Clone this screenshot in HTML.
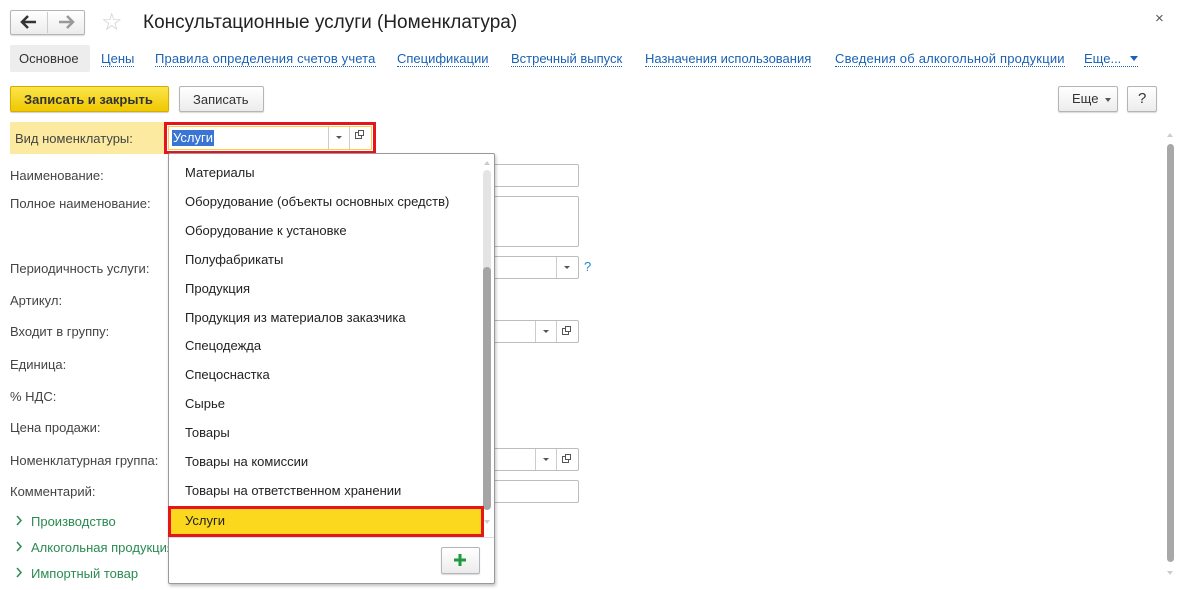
<!DOCTYPE html>
<html><head><meta charset="utf-8"><style>
*{box-sizing:border-box;margin:0;padding:0}
body{width:1177px;height:590px;overflow:hidden;background:#fff;font-family:"Liberation Sans",Arial,sans-serif;font-size:13px;color:#333;position:relative}
.a{position:absolute;white-space:nowrap}
.lnk{color:#1a62b4;border-bottom:1px dotted #1a62b4;line-height:15px}
.btn{position:absolute;border:1px solid #b5b5b5;border-radius:2px;background:linear-gradient(#fff,#ececec);box-shadow:0 1px 1px rgba(0,0,0,.15)}
.inp{position:absolute;border:1px solid #bdbdbd;border-radius:2px;background:#fff}
.lbl{position:absolute;color:#444}
.it{position:absolute;left:185px;color:#222}
.grn{color:#2a8a52}
</style></head><body>
<!-- nav -->
<div class="btn" style="left:10px;top:10px;width:75px;height:25px"></div>
<div class="a" style="left:47px;top:12px;width:1px;height:21px;background:#ccc"></div>
<svg class="a" style="left:20px;top:15px" width="18" height="14"><path d="M2 7H16M8 1L2 7L8 13" stroke="#333" stroke-width="2.5" fill="none"/></svg>
<svg class="a" style="left:57px;top:15px" width="18" height="14"><path d="M2 7H16M10 1L16 7L10 13" stroke="#999" stroke-width="2.5" fill="none"/></svg>
<div class="a" style="left:101px;top:8px;font-size:24px;color:#ccc">☆</div>
<div class="a" style="left:143px;top:12px;font-size:19px;color:#222">Консультационные услуги (Номенклатура)</div>
<div class="a" style="left:1155px;top:10px;font-size:15px;color:#555">×</div>
<!-- tabs -->
<div class="a" style="left:10px;top:45px;width:80px;height:27px;background:#ededed;border-radius:2px"></div>
<div class="a" style="left:19px;top:51px;color:#333">Основное</div>
<div class="a lnk" style="left:101px;top:51px">Цены</div>
<div class="a lnk" style="left:155px;top:51px;letter-spacing:0.15px">Правила определения счетов учета</div>
<div class="a lnk" style="left:397px;top:51px">Спецификации</div>
<div class="a lnk" style="left:511px;top:51px">Встречный выпуск</div>
<div class="a lnk" style="left:645px;top:51px">Назначения использования</div>
<div class="a lnk" style="left:835px;top:51px;letter-spacing:0.2px">Сведения об алкогольной продукции</div>
<div class="a lnk" style="left:1084px;top:51px;width:54px">Еще...</div>
<div class="a" style="left:1130px;top:56px;border:4px solid transparent;border-top:5px solid #1a62b4"></div>
<!-- toolbar -->
<div class="a" style="left:10px;top:86px;width:159px;height:26px;background:linear-gradient(#fbe54a,#f0c800);border:1px solid #d4ad00;border-radius:2px;box-shadow:0 1px 1px rgba(0,0,0,.2)"></div>
<div class="a" style="left:24px;top:92px;color:#333;font-weight:bold;font-size:13px">Записать и закрыть</div>
<div class="btn" style="left:179px;top:86px;width:85px;height:26px"></div>
<div class="a" style="left:193px;top:92px">Записать</div>
<div class="btn" style="left:1058px;top:86px;width:60px;height:26px"></div>
<div class="a" style="left:1072px;top:91px">Еще</div>
<div class="a" style="left:1105px;top:98px;border:3px solid transparent;border-top:4px solid #555"></div>
<div class="btn" style="left:1127px;top:86px;width:30px;height:26px"></div>
<div class="a" style="left:1138px;top:90px;font-size:15px">?</div>
<!-- field row -->
<div class="a" style="left:10px;top:122px;width:154px;height:32px;background:#fbeaa0"></div>
<div class="lbl" style="left:15px;top:131px">Вид номенклатуры:</div>
<div class="a" style="left:164px;top:122px;width:212px;height:32px;border:3px solid #e8141c;background:#fff"></div>
<div class="a" style="left:168px;top:126px;width:204px;height:24px;border:1px solid #f0d050"></div>
<div class="a" style="left:172px;top:130px;background:#3a75d4;color:#fff;padding:0 1px;line-height:16px">Услуги</div>
<div class="a" style="left:328px;top:127px;width:1px;height:22px;background:#ccc"></div>
<div class="a" style="left:349px;top:127px;width:1px;height:22px;background:#ccc"></div>
<div class="a" style="left:336px;top:136px;border:3px solid transparent;border-top:3px solid #555"></div>
<div class="a" style="left:355px;top:132px;width:7px;height:7px;border:1px solid #555"></div>
<div class="a" style="left:358px;top:130px;width:6px;height:6px;border:1px solid #555;background:#fff"></div>
<!-- labels -->
<div class="lbl" style="left:10px;top:168px">Наименование:</div>
<div class="lbl" style="left:10px;top:196px">Полное наименование:</div>
<div class="lbl" style="left:10px;top:261px">Периодичность услуги:</div>
<div class="lbl" style="left:10px;top:293px">Артикул:</div>
<div class="lbl" style="left:10px;top:324px">Входит в группу:</div>
<div class="lbl" style="left:10px;top:357px">Единица:</div>
<div class="lbl" style="left:10px;top:389px">% НДС:</div>
<div class="lbl" style="left:10px;top:420px">Цена продажи:</div>
<div class="lbl" style="left:10px;top:453px">Номенклатурная группа:</div>
<div class="lbl" style="left:10px;top:484px">Комментарий:</div>
<svg class="a" style="left:15px;top:515px" width="8" height="64"><path d="M2 1L6 5.5L2 10M2 27L6 31.5L2 36M2 53L6 57.5L2 62" stroke="#2a8a52" stroke-width="1.5" fill="none"/></svg>
<div class="a grn" style="left:31px;top:514px">Производство</div>
<div class="a grn" style="left:31px;top:540px">Алкогольная продукция</div>
<div class="a grn" style="left:31px;top:566px">Импортный товар</div>
<!-- inputs behind -->
<div class="inp" style="left:470px;top:164px;width:109px;height:23px"></div>
<div class="inp" style="left:470px;top:196px;width:109px;height:51px"></div>
<div class="inp" style="left:470px;top:256px;width:109px;height:23px"></div>
<div class="a" style="left:556px;top:257px;width:1px;height:21px;background:#ccc"></div>
<div class="a" style="left:564px;top:266px;border:3px solid transparent;border-top:3px solid #555"></div>
<div class="a" style="left:584px;top:259px;color:#1a8ad4;font-size:13px">?</div>
<div class="inp" style="left:470px;top:320px;width:109px;height:23px"></div>
<div class="a" style="left:535px;top:321px;width:1px;height:21px;background:#ccc"></div>
<div class="a" style="left:556px;top:321px;width:1px;height:21px;background:#ccc"></div>
<div class="a" style="left:543px;top:330px;border:3px solid transparent;border-top:3px solid #555"></div>
<div class="a" style="left:562px;top:328px;width:7px;height:7px;border:1px solid #555"></div>
<div class="a" style="left:565px;top:326px;width:6px;height:6px;border:1px solid #555;background:#fff"></div>
<div class="inp" style="left:470px;top:448px;width:109px;height:23px"></div>
<div class="a" style="left:535px;top:449px;width:1px;height:21px;background:#ccc"></div>
<div class="a" style="left:556px;top:449px;width:1px;height:21px;background:#ccc"></div>
<div class="a" style="left:543px;top:458px;border:3px solid transparent;border-top:3px solid #555"></div>
<div class="a" style="left:562px;top:456px;width:7px;height:7px;border:1px solid #555"></div>
<div class="a" style="left:565px;top:454px;width:6px;height:6px;border:1px solid #555;background:#fff"></div>
<div class="inp" style="left:470px;top:480px;width:109px;height:23px"></div>
<!-- dropdown -->
<div class="a" style="left:168px;top:153px;width:327px;height:431px;background:#fff;border:1px solid #999;border-radius:2px;box-shadow:1px 2px 3px rgba(0,0,0,.25)"></div>
<div class="a" style="left:483px;top:170px;width:8px;height:338px;background:#e4e4e4;border-radius:4px"></div>
<div class="a" style="left:483px;top:267px;width:8px;height:243px;background:#a5a5a5;border-radius:4px"></div>
<div class="a" style="left:484px;top:158px;border:3px solid transparent;border-bottom:4px solid #ccc"></div>
<div class="a" style="left:484px;top:520px;border:3px solid transparent;border-top:4px solid #ccc"></div>
<div class="it" style="top:165px">Материалы</div>
<div class="it" style="top:194px">Оборудование (объекты основных средств)</div>
<div class="it" style="top:223px">Оборудование к установке</div>
<div class="it" style="top:252px">Полуфабрикаты</div>
<div class="it" style="top:281px">Продукция</div>
<div class="it" style="top:310px">Продукция из материалов заказчика</div>
<div class="it" style="top:338px">Спецодежда</div>
<div class="it" style="top:367px">Спецоснастка</div>
<div class="it" style="top:396px">Сырье</div>
<div class="it" style="top:425px">Товары</div>
<div class="it" style="top:454px">Товары на комиссии</div>
<div class="it" style="top:483px">Товары на ответственном хранении</div>
<div class="a" style="left:168px;top:506px;width:316px;height:31px;background:#fbd81e;border:3px solid #e8141c"></div>
<div class="it" style="top:513px">Услуги</div>
<div class="a" style="left:169px;top:537px;width:325px;height:1px;background:#ddd"></div>
<div class="btn" style="left:441px;top:547px;width:39px;height:27px"></div>
<svg class="a" style="left:454px;top:554px" width="12" height="12"><path d="M6 0V12M0 6H12" stroke="#1e9a3e" stroke-width="3"/></svg>
<!-- page scrollbar -->
<div class="a" style="left:1167px;top:130px;border:3px solid transparent;border-bottom:4px solid #ccc"></div>
<div class="a" style="left:1167px;top:144px;width:7px;height:418px;background:#a8a8a8;border-radius:4px"></div>
<div class="a" style="left:1167px;top:571px;border:3px solid transparent;border-top:4px solid #ccc"></div>
</body></html>
